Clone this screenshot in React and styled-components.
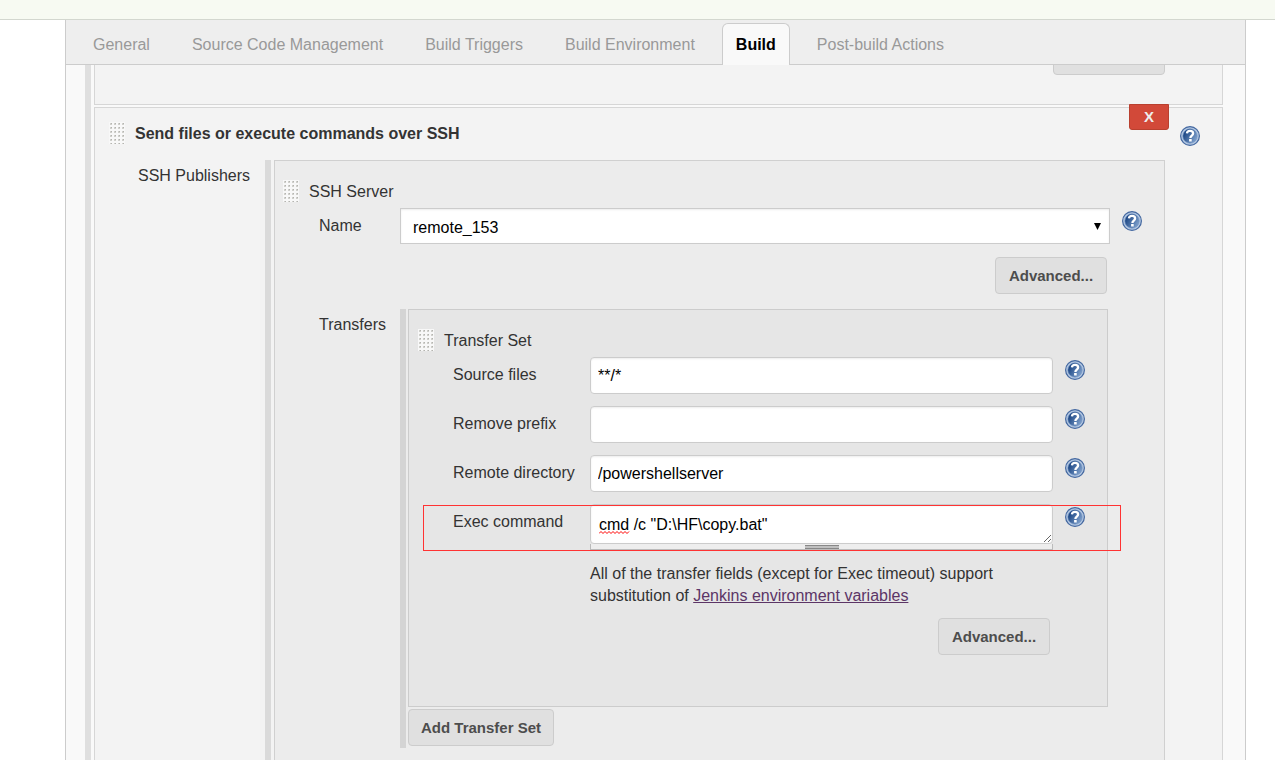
import React, { useState } from 'react';
import styled, { createGlobalStyle, css } from 'styled-components';

const GlobalStyle = createGlobalStyle`
  * {
    box-sizing: border-box;
  }

  body {
    margin: 0;
    color: #333;
    font-family: 'Liberation Sans', Arial, sans-serif;
    font-size: 16px;
    line-height: 22px;

    background-color: #fff;
  }
`;

const Page = styled.div`
  display: flex;
  flex-direction: column;

  height: 100vh;
  overflow: hidden;
`;

const Breadcrumbs = styled.header`
  flex: none;

  height: 20px;
  background-color: #f7faf2;
  border-bottom: 1px solid #d3d7cf;
`;

const Main = styled.main`
  display: flex;
  flex: 1;
  flex-direction: column;

  min-height: 0;
  margin: 0 29px 0 65px;

  background-color: #f9f9f9;
  border: 1px solid #ccc;
  border-width: 0 1px;
`;

const TabBar = styled.nav`
  display: flex;
  flex: none;
  align-items: flex-end;
  gap: 2px;

  height: 45px;
  padding: 0 7px;

  background-color: #eee;
  box-shadow: inset 0 -1px #ccc;
`;

const Tab = styled.a`
  height: 42px;
  padding: 0 20px;

  color: #999;
  line-height: 44px;
  text-decoration: none;
  white-space: nowrap;

  ${(props) =>
    props.$active &&
    css`
      margin: 0 5px;
      padding: 0 13px;

      color: #000;
      font-weight: bold;
      line-height: 42px;

      background-color: #f9f9f9;
      border: 1px solid #ccc;
      border-bottom: none;
      border-radius: 6px 6px 0 0;
    `}
`;

const Builders = styled.div`
  display: flex;
  flex: 1;
  flex-direction: column;
  gap: 2px;

  min-height: 0;
  margin: 0 22px 0 19px;
  padding-left: 3px;

  border-left: 6px solid #dfdfdf;
`;

const PreviousStep = styled.section`
  display: flex;
  flex: none;
  align-items: flex-end;
  justify-content: flex-end;

  height: 40px;
  padding: 0 57px 29px 0;
  overflow: hidden;

  background-color: #f3f3f3;
  border: 1px solid #d6d6d6;
  border-top: none;
`;

const Step = styled.section`
  position: relative;

  display: flex;
  flex: 1;
  flex-direction: column;

  padding: 14px 0 0;

  background-color: #f3f3f3;
  border: 1px solid #d6d6d6;
  border-bottom: none;
`;

const StepHeader = styled.div`
  display: flex;
  align-items: flex-end;
  justify-content: space-between;

  padding: 0 22px 0 14px;
`;

const StepBody = styled.div`
  display: grid;
  grid-template-columns: 127px 1fr;
  flex: 1;

  margin-top: 14px;
  padding: 0 57px 0 43px;
`;

const Title = styled.div`
  display: flex;
  align-items: flex-start;
  gap: 10px;

  font-weight: ${(props) => (props.$bold ? 'bold' : 'normal')};
  line-height: 24px;
`;

const SideLabel = styled.div`
  padding-top: 5px;
`;

const Repeatable = styled.div`
  padding-left: 3px;

  border-left: 6px solid #dadada;
`;

const ServerSet = styled.div`
  height: 100%;
  padding: 19px 0 0 8px;

  background-color: #ececec;
  border: 1px solid #d0d0d0;
  border-bottom: none;
`;

const ServerGrid = styled.div`
  display: grid;
  grid-template-columns: 81px 1fr 54px;

  margin-top: 4px;
  padding-left: 36px;
`;

const TransferArea = styled.div`
  grid-column: 2 / 4;

  margin-right: 56px;
  padding: 0 0 2px 2px;

  border-left: 6px solid #d4d4d4;
`;

const TransferSet = styled.div`
  margin-bottom: 2px;
  padding: 19px 0 51px 9px;

  background-color: #e6e6e6;
  border: 1px solid #ccc;
`;

const TransferRow = styled.div`
  position: relative;

  display: grid;
  grid-template-columns: 137px 1fr 54px;

  margin-top: ${(props) => (props.$first ? '4px' : '12px')};
  padding-left: 35px;
`;

const FieldLabel = styled.label`
  padding-top: 7px;
`;

const HelpCell = styled.div`
  padding: 3px 0 0 12px;
`;

const field = css`
  display: block;

  width: 100%;

  color: #000;
  font-family: inherit;
  font-size: 16px;

  background-color: #fff;
  border: 1px solid #ccc;
  outline: none;
  box-shadow: inset 0 1px 2px rgba(0, 0, 0, 0.08);
`;

const Input = styled.input.attrs({ type: 'text' })`
  ${field}

  height: 37px;
  padding: 0 7px;

  border-radius: 4px;
`;

const SelectWrapper = styled.div`
  position: relative;
`;

const Select = styled.select`
  ${field}

  height: 36px;
  padding: 2px 12px 0;

  appearance: none;
  border-radius: 0;
`;

const Arrow = styled.svg`
  position: absolute;
  top: 15px;
  right: 9px;

  pointer-events: none;
`;

const TextareaWrapper = styled.div`
  position: relative;
`;

const Textarea = styled.textarea`
  ${field}

  height: 40px;
  padding: 9px 8px 7px;
  overflow: hidden;

  line-height: 22px;

  border-radius: 4px;
  resize: vertical;
`;

const Squiggle = styled.svg`
  position: absolute;
  top: 27px;
  left: 9px;
`;

const ResizeBar = styled.div`
  display: flex;
  justify-content: center;

  height: 6px;

  background-color: #eee;
  border: 1px solid #bbb;
  border-top: none;
`;

const ResizeHandle = styled.div`
  width: 34px;
  height: 4px;
  margin-top: 1px;

  background-color: #c0c0c0;
  border: solid #888;
  border-width: 1px 0;
`;

const Highlight = styled.div`
  position: absolute;
  top: 1px;
  right: -14px;
  bottom: -1px;
  left: 5px;

  border: 1px solid #f33;
  pointer-events: none;
`;

const HelpText = styled.p`
  margin: 13px 64px 11px 172px;
`;

const EnvLink = styled.a`
  color: #5c3566;
`;

const Actions = styled.div`
  display: flex;
  grid-column: 1 / 3;
  justify-content: flex-end;

  margin: ${(props) => props.$margin};
`;

const Button = styled.button`
  height: 37px;
  min-width: 112px;
  padding: 0 12px;

  cursor: pointer;
  color: #4d4d4d;
  font-family: inherit;
  font-size: 15px;
  font-weight: bold;

  background-color: #e0e0e0;
  border: 1px solid #ccc;
  border-radius: 4px;
`;

const DeleteButton = styled.button`
  position: absolute;
  top: -4px;
  right: 53px;

  width: 40px;
  height: 26px;
  padding: 0 0 2px;

  cursor: pointer;
  color: #eee;
  font-family: inherit;
  font-size: 15px;
  font-weight: bold;

  background-color: #d24939;
  border: 1px solid #b9402f;
  border-radius: 0 0 3px 3px;
`;

const HelpLink = styled.a`
  display: block;

  width: 20px;
  height: 20px;
`;

const tabs = [
  'General',
  'Source Code Management',
  'Build Triggers',
  'Build Environment',
  'Build',
  'Post-build Actions',
];

const Help = () => (
  <HelpLink href="#help" aria-label="Help">
    <svg width="20" height="20" viewBox="0 0 20 20">
      <defs>
        <linearGradient id="help" x1="0" y1="0.2" x2="1" y2="0.8">
          <stop offset="0.15" stopColor="#204a87" />
          <stop offset="1" stopColor="#85a6d0" />
        </linearGradient>
      </defs>
      <circle cx="10" cy="10" r="9.4" fill="#b4c8e2" stroke="#4468a0" strokeWidth="1.2" />
      <circle cx="10" cy="10" r="7.2" fill="url(#help)" stroke="#6d8fc0" strokeWidth="0.6" />
      <path
        d="M6.9 7.4C7.1 5.6 8.4 4.9 10 4.9c1.9 0 3.1 1 3.1 2.5 0 2.1-2.7 2.2-2.7 4.5"
        fill="none"
        stroke="#fff"
        strokeWidth="2.3"
      />
      <rect x="9.1" y="13" width="2.6" height="2.5" fill="#fff" />
    </svg>
  </HelpLink>
);

const gripRows = [1, 5, 9, 13, 17, 21];
const gripColumns = [1, 5, 9, 13];

const Grip = () => (
  <svg width="16" height="22" viewBox="0 0 16 22" aria-hidden="true">
    <rect width="16" height="22" fill="#f8f8f8" />
    {gripRows.map((y) =>
      gripColumns.map((x) => (
        <g key={`${x}-${y}`}>
          <rect x={x} y={y} width="2" height="2" fill="#d0d0cc" />
          <rect x={x + 1} y={y} width="1" height="1" fill="#b4b4b0" />
        </g>
      ))
    )}
  </svg>
);

const TransferField = ({ id, label, first, children }) => (
  <TransferRow $first={first}>
    <FieldLabel htmlFor={id}>{label}</FieldLabel>
    {children}
    <HelpCell>
      <Help />
    </HelpCell>
  </TransferRow>
);

const App = () => {
  const [transfer, setTransfer] = useState({
    source: '**/*',
    prefix: '',
    directory: '/powershellserver',
    command: 'cmd /c "D:\\HF\\copy.bat"',
  });

  const handleChange = (e) =>
    setTransfer({ ...transfer, [e.target.name]: e.target.value });

  return (
    <Page>
      <GlobalStyle />
      <Breadcrumbs />
      <Main>
        <TabBar>
          {tabs.map((tab) => (
            <Tab key={tab} href="#config" $active={tab === 'Build'}>
              {tab}
            </Tab>
          ))}
        </TabBar>
        <Builders>
          <PreviousStep>
            <Button type="button" aria-label="Advanced" />
          </PreviousStep>
          <Step>
            <DeleteButton type="button">X</DeleteButton>
            <StepHeader>
              <Title $bold>
                <Grip />
                Send files or execute commands over SSH
              </Title>
              <Help />
            </StepHeader>
            <StepBody>
              <SideLabel>SSH Publishers</SideLabel>
              <Repeatable>
                <ServerSet>
                  <Title>
                    <Grip />
                    SSH Server
                  </Title>
                  <ServerGrid>
                    <FieldLabel htmlFor="server">Name</FieldLabel>
                    <SelectWrapper>
                      <Select id="server">
                        <option>remote_153</option>
                      </Select>
                      <Arrow width="7" height="7" viewBox="0 0 7 7">
                        <path d="M0 0h7L3.5 7z" fill="#000" />
                      </Arrow>
                    </SelectWrapper>
                    <HelpCell>
                      <Help />
                    </HelpCell>
                    <Actions $margin="13px 3px 11px 0">
                      <Button type="button">Advanced...</Button>
                    </Actions>
                  </ServerGrid>
                  <ServerGrid>
                    <SideLabel>Transfers</SideLabel>
                    <TransferArea>
                      <TransferSet>
                        <Title>
                          <Grip />
                          Transfer Set
                        </Title>
                        <TransferField id="source" label="Source files" first>
                          <Input
                            id="source"
                            name="source"
                            value={transfer.source}
                            onChange={handleChange}
                          />
                        </TransferField>
                        <TransferField id="prefix" label="Remove prefix">
                          <Input
                            id="prefix"
                            name="prefix"
                            value={transfer.prefix}
                            onChange={handleChange}
                          />
                        </TransferField>
                        <TransferField id="directory" label="Remote directory">
                          <Input
                            id="directory"
                            name="directory"
                            value={transfer.directory}
                            onChange={handleChange}
                          />
                        </TransferField>
                        <TransferRow>
                          <FieldLabel htmlFor="command">Exec command</FieldLabel>
                          <TextareaWrapper>
                            <Textarea
                              id="command"
                              name="command"
                              rows={1}
                              value={transfer.command}
                              onChange={handleChange}
                            />
                            <Squiggle width="31" height="3" viewBox="0 0 31 3">
                              <path
                                d="M0 2.5l2-2 2 2 2-2 2 2 2-2 2 2 2-2 2 2 2-2 2 2 2-2 2 2 2-2 2 2 2-2"
                                fill="none"
                                stroke="#f00"
                              />
                            </Squiggle>
                            <ResizeBar>
                              <ResizeHandle />
                            </ResizeBar>
                          </TextareaWrapper>
                          <HelpCell>
                            <Help />
                          </HelpCell>
                          <Highlight />
                        </TransferRow>
                        <HelpText>
                          All of the transfer fields (except for Exec timeout) support
                          substitution of{' '}
                          <EnvLink href="#env">Jenkins environment variables</EnvLink>
                        </HelpText>
                        <Actions $margin="0 57px 0 0">
                          <Button type="button">Advanced...</Button>
                        </Actions>
                      </TransferSet>
                      <Button type="button">Add Transfer Set</Button>
                    </TransferArea>
                  </ServerGrid>
                </ServerSet>
              </Repeatable>
            </StepBody>
          </Step>
        </Builders>
      </Main>
    </Page>
  );
};

export default App;
